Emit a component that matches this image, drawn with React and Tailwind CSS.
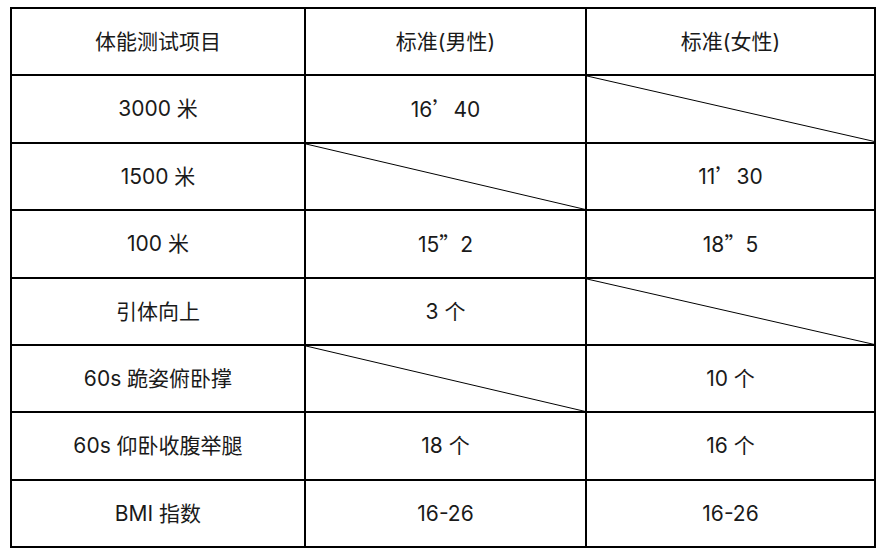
const ROWS = [
  { name: '3000 米', male: ['16', '’', '40'], female: null },
  { name: '1500 米', male: null, female: ['11', '’', '30'] },
  { name: '100 米', male: ['15', '”', '2'], female: ['18', '”', '5'] },
  { name: '引体向上', male: ['3 个'], female: null },
  { name: '60s 跪姿俯卧撑', male: null, female: ['10 个'] },
  { name: '60s 仰卧收腹举腿', male: ['18 个'], female: ['16 个'] },
  { name: 'BMI 指数', male: ['16-26'], female: ['16-26'] },
];

function Value({ parts }) {
  if (parts.length === 1) return <span>{parts[0]}</span>;
  return (
    <span>
      {parts[0]}
      <span className="font-['Noto_Sans_CJK_SC',sans-serif]">{parts[1]}</span>
      {parts[2]}
    </span>
  );
}

function Cell({ children, width, slash }) {
  return (
    <div
      className={`relative flex h-[67.4px] items-center justify-center border-r-2 border-b-2 border-black ${width}`}
    >
      {slash ? (
        <svg className="absolute inset-0 h-full w-full" preserveAspectRatio="none" viewBox="0 0 100 100">
          <line x1="0" y1="0" x2="100" y2="100" stroke="#000" strokeWidth="1" vectorEffect="non-scaling-stroke" />
        </svg>
      ) : (
        children
      )}
    </div>
  );
}

export default function App() {
  return (
    <div className="h-[552px] w-[880px] bg-white pt-[7px] pl-[10px] text-[21px] text-[#1a1a1a] font-['Inter','Noto_Sans_CJK_SC',sans-serif]">
      <div className="w-[866px] border-t-2 border-l-2 border-black">
        <div className="flex">
          <Cell width="w-[294px]">体能测试项目</Cell>
          <Cell width="w-[281px]">标准(男性)</Cell>
          <Cell width="w-[289px]">标准(女性)</Cell>
        </div>
        {ROWS.map((row) => (
          <div key={row.name} className="flex">
            <Cell width="w-[294px]">{row.name}</Cell>
            <Cell width="w-[281px]" slash={!row.male}>
              {row.male && <Value parts={row.male} />}
            </Cell>
            <Cell width="w-[289px]" slash={!row.female}>
              {row.female && <Value parts={row.female} />}
            </Cell>
          </div>
        ))}
      </div>
    </div>
  );
}
